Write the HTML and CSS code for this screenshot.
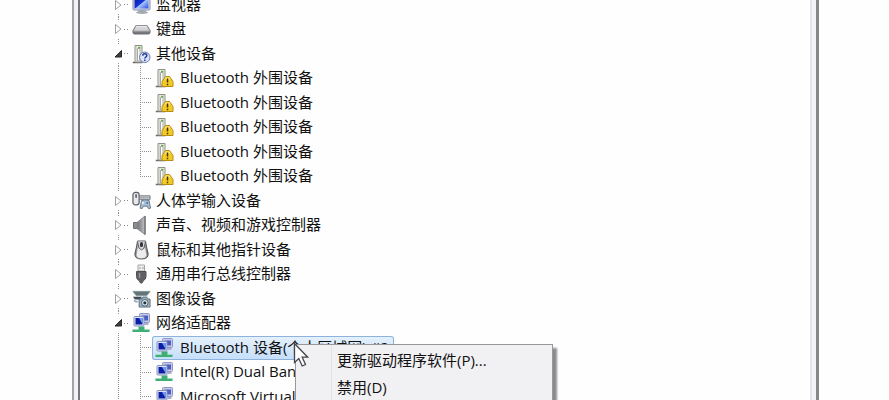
FILE: index.html
```html
<!DOCTYPE html>
<html lang="zh-CN">
<head>
  <meta charset="UTF-8" />
  <meta name="viewport" content="width=device-width, initial-scale=1.0" />
  <title>设备管理器</title>
  <link rel="stylesheet" href="styles.css">
</head>
<body>
  <svg class="sprites" aria-hidden="true">
    <defs>
      <linearGradient id="screen" x1="0" y1="0" x2="1" y2="1">
        <stop offset="0" stop-color="#0a16a8" />
        <stop offset=".5" stop-color="#1434d8" />
        <stop offset=".55" stop-color="#a9c4ff" />
        <stop offset="1" stop-color="#2a4fe0" />
      </linearGradient>
      <linearGradient id="metal" x1="0" y1="0" x2="1" y2="0">
        <stop offset="0" stop-color="#6c6c70" />
        <stop offset=".4" stop-color="#f4f4f4" />
        <stop offset="1" stop-color="#707074" />
      </linearGradient>
      <linearGradient id="cone" x1="0" y1="0" x2="1" y2="0">
        <stop offset="0" stop-color="#6e7074" />
        <stop offset="1" stop-color="#c2c4c8" />
      </linearGradient>
      <linearGradient id="keys" x1="0" y1="0" x2="0" y2="1">
        <stop offset="0" stop-color="#f2f2f4" />
        <stop offset="1" stop-color="#b4b4ba" />
      </linearGradient>
    </defs>

    <symbol id="closed" viewBox="0 0 10 18">
      <path d="M2.500 4.500v9L8 9z" fill="#fff" stroke="#a0a0a0" />
    </symbol>
    <symbol id="open" viewBox="0 0 10 18">
      <path d="M8.500 5.500v6.500H2z" fill="#404040" stroke="#262626" />
    </symbol>

    <symbol id="monitor" viewBox="0 0 18 20">
      <path d="M6 15h7l1 3H5z" fill="#b8bcc4" />
      <ellipse cx="9.500" cy="17.500" rx="6" ry="1.500" fill="#a4a8b0" />
      <rect x=".5" y="1" width="17" height="14" rx="1" fill="#d4dae8" stroke="#8890a8" />
      <rect x="2" y="2" width="14" height="11.500" fill="url(#screen)" />
    </symbol>

    <symbol id="keyboard" viewBox="0 0 18 20">
      <path d="M3.500 6.500h11l3 5v2q0 1.500-1.500 1.500H2Q.5 15 .5 13.500v-2z" fill="#77777d" stroke="#6c6c74" />
      <path d="M3.700 6.500h10.600l3 5q0 1-1 1H1.700q-1 0-1-1z" fill="url(#keys)" stroke="#929298" />
      <path d="M4 8.500h10M3 10.500h12" stroke="#d8d8dc" stroke-dasharray="1.500 .5" />
    </symbol>

    <symbol id="tower" viewBox="0 0 18 20">
      <path d="M0 18.500h10" stroke="#6c6c6c" stroke-width="1.500" />
      <path d="M2.500 1.500h7v16.500h-7z" fill="#eef0e6" stroke="#8c9088" />
      <path d="M3.500 2v15.500" stroke="#bcc0b8" />
      <path d="M5 4.500h2.500V17H5z" fill="#fff" stroke="#a6aaa2" />
      <path d="M5.500 3.500H8" stroke="#6bae51" stroke-width="1.500" />
    </symbol>

    <symbol id="unknown" viewBox="0 0 18 20">
      <use href="#tower" />
      <circle cx="12.300" cy="13.300" r="5.200" fill="#dde4fa" stroke="#6878b0" />
      <path d="M10.300 11.800q0-2 2-2t2 1.700q0 1-1 1.600t-1 1.400M12.300 15.500v1.500" fill="none" stroke="#28409c" stroke-width="1.500" />
    </symbol>

    <symbol id="warning" viewBox="0 0 18 20">
      <use href="#tower" />
      <path d="M10 8.500h4l3.500 5v5h-11v-5z" fill="#f3cb27" stroke="#b98c14" stroke-linejoin="round" />
      <path d="M10 9.500h4l1 2H9z" fill="#ffe978" />
      <path d="M12 10.500v4M12 15.700v1.600" stroke="#403000" stroke-width="1.500" />
    </symbol>

    <symbol id="hid" viewBox="0 0 20 20">
      <rect x="1" y="1" width="6.500" height="13" rx="2.500" fill="#e6e8ec" stroke="#5a5e66" stroke-width="1.300" />
      <path d="M4.300 3v3.500" stroke="#44484e" stroke-width="1.500" />
      <path d="M8 4.500h11v4H8z" fill="#a4a8ae" stroke="#7c8086" />
      <path d="M9 5.500h9M9 7.500h9" stroke="#dcdfe4" stroke-dasharray="1 1" />
      <path d="M10 9.500q4-1.500 8 0l1.500 8q-2.500 2-3.500-2h-4q-1 4-3.500 2z" fill="#a8bdcf" stroke="#62788c" />
      <circle cx="11.500" cy="12" r="1" fill="#fff" />
      <circle cx="16" cy="12" r="1" fill="#3b6a96" />
    </symbol>

    <symbol id="speaker" viewBox="0 0 18 20">
      <path d="M1 7.500h4v6H1z" fill="#8c8e92" stroke="#6c6e72" />
      <path d="M4.500 7.500L12.500 1v18.500L4.500 13.500z" fill="url(#cone)" stroke="#88898d" />
      <path d="M12.500 1v18.500" stroke="#77797d" stroke-width="1.500" />
    </symbol>

    <symbol id="mouse" viewBox="0 0 18 20">
      <path d="M5 1h8l1 6 1.500 6q1 6-6.500 6t-6.500-6L4 7z" fill="url(#metal)" stroke="#56565a" />
      <path d="M5.500 8Q9 12 12.500 8l1.500 7q0 3-5 3t-5-3z" fill="#ececee" />
      <path d="M5 1.500L6.500 8 9 10l2.500-2L13 1.500" fill="#d6d6d8" stroke="#66666a" />
      <rect x="7.500" y="2" width="3" height="5" rx="1.500" fill="#38383c" />
    </symbol>

    <symbol id="usb" viewBox="0 0 18 20">
      <path d="M5.500 1h6.500v6H5.500z" fill="#f0f0f0" stroke="#a4a4a4" />
      <path d="M7.500 3v2M10.500 3v2" stroke="#999" />
      <path d="M4 7.500h9.500v5q0 3-2.500 4L9.500 19H8l-1.500-2.500q-2.500-1-2.500-4z" fill="#606064" stroke="#505054" />
      <path d="M7 9v5" stroke="#95959a" stroke-width="1.500" />
    </symbol>

    <symbol id="imaging" viewBox="0 0 20 20">
      <path d="M1 2h18l-4 5H5z" fill="#62757a" stroke="#849298" />
      <path d="M5 6.500h11l2 2H3z" fill="#e2e8ec" />
      <path d="M1 7.500h9v3H3z" fill="#3c4d56" />
      <path d="M7.500 10h3l1-2h4l1 2h2.500v8.500H7.500z" fill="#9fb4c2" stroke="#587082" />
      <circle cx="13.500" cy="14" r="3.500" fill="#e4ecf0" stroke="#455a68" />
      <circle cx="13.500" cy="14" r="1.700" fill="#25343e" />
      <path d="M2 12l4 1" stroke="#9cacb4" stroke-width="2" />
    </symbol>

    <symbol id="network" viewBox="0 0 18 20">
      <rect x="7" y=".5" width="10" height="9" rx="1" fill="#c6cce8" stroke="#8f96c4" />
      <rect x="9" y="2.500" width="6.500" height="5" fill="#4c5cc0" />
      <path d="M12 10h4v2h-4z" fill="#a8aed0" />
      <rect x="1.500" y="3.500" width="10" height="9.500" rx="1" fill="#dde2f4" stroke="#8690bc" />
      <rect x="3" y="5" width="7" height="6.500" fill="#0c1fa4" />
      <path d="M6.500 5H10v6z" fill="#6c9cf8" />
      <path d="M6 13.500h6v3h5V19H0v-2.500h6z" fill="#3fae74" />
      <path d="M0 16.500h6M12 16.500h5" stroke="#a0dcbc" />
    </symbol>
  </svg>

  <main class="window">
    <ul class="tree">
      <li class="row">
        <button class="toggle" aria-label="展开"><svg><use href="#closed" /></svg></button>
        <span class="link"></span>
        <span class="item"><svg class="icon"><use href="#monitor" /></svg>监视器</span>
      </li>
      <li class="row">
        <button class="toggle" aria-label="展开"><svg><use href="#closed" /></svg></button>
        <span class="link"></span>
        <span class="item"><svg class="icon"><use href="#keyboard" /></svg>键盘</span>
      </li>
      <li class="row">
        <button class="toggle" aria-label="折叠"><svg><use href="#open" /></svg></button>
        <span class="link"></span>
        <span class="item"><svg class="icon"><use href="#unknown" /></svg>其他设备</span>
      </li>
      <li class="row child">
        <span class="trunk"></span><span class="branch"></span>
        <span class="item"><svg class="icon"><use href="#warning" /></svg>Bluetooth 外围设备</span>
      </li>
      <li class="row child">
        <span class="trunk"></span><span class="branch"></span>
        <span class="item"><svg class="icon"><use href="#warning" /></svg>Bluetooth 外围设备</span>
      </li>
      <li class="row child">
        <span class="trunk"></span><span class="branch"></span>
        <span class="item"><svg class="icon"><use href="#warning" /></svg>Bluetooth 外围设备</span>
      </li>
      <li class="row child">
        <span class="trunk"></span><span class="branch"></span>
        <span class="item"><svg class="icon"><use href="#warning" /></svg>Bluetooth 外围设备</span>
      </li>
      <li class="row child">
        <span class="trunk"></span><span class="branch last"></span>
        <span class="item"><svg class="icon"><use href="#warning" /></svg>Bluetooth 外围设备</span>
      </li>
      <li class="row">
        <button class="toggle" aria-label="展开"><svg><use href="#closed" /></svg></button>
        <span class="link"></span>
        <span class="item"><svg class="icon"><use href="#hid" /></svg>人体学输入设备</span>
      </li>
      <li class="row">
        <button class="toggle" aria-label="展开"><svg><use href="#closed" /></svg></button>
        <span class="link"></span>
        <span class="item"><svg class="icon"><use href="#speaker" /></svg>声音、视频和游戏控制器</span>
      </li>
      <li class="row">
        <button class="toggle" aria-label="展开"><svg><use href="#closed" /></svg></button>
        <span class="link"></span>
        <span class="item"><svg class="icon"><use href="#mouse" /></svg>鼠标和其他指针设备</span>
      </li>
      <li class="row">
        <button class="toggle" aria-label="展开"><svg><use href="#closed" /></svg></button>
        <span class="link"></span>
        <span class="item"><svg class="icon"><use href="#usb" /></svg>通用串行总线控制器</span>
      </li>
      <li class="row">
        <button class="toggle" aria-label="展开"><svg><use href="#closed" /></svg></button>
        <span class="link"></span>
        <span class="item"><svg class="icon"><use href="#imaging" /></svg>图像设备</span>
      </li>
      <li class="row">
        <button class="toggle" aria-label="折叠"><svg><use href="#open" /></svg></button>
        <span class="link"></span>
        <span class="item"><svg class="icon"><use href="#network" /></svg>网络适配器</span>
      </li>
      <li class="row child">
        <span class="trunk"></span><span class="branch"></span>
        <span class="item selected"><svg class="icon"><use href="#network" /></svg>Bluetooth 设备(个人区域网) #2</span>
      </li>
      <li class="row child">
        <span class="trunk"></span><span class="branch"></span>
        <span class="item"><svg class="icon"><use href="#network" /></svg>Intel(R) Dual Band</span>
      </li>
      <li class="row child">
        <span class="trunk"></span><span class="branch"></span>
        <span class="item"><svg class="icon"><use href="#network" /></svg>Microsoft Virtual</span>
      </li>
    </ul>
  </main>

  <div class="menu">
    <button>更新驱动程序软件(P)...</button>
    <button>禁用(D)</button>
  </div>

  <svg class="cursor" viewBox="0 0 16 26" aria-hidden="true">
    <path d="M1.500 1.500v19l4.300-4 3.400 7.500 3.300-1.500-3.300-7.300h5.500z" fill="#fff" stroke="#44464e" stroke-width="1.300" />
  </svg>
</body>
</html>
```

FILE: styles.css
```css
* {
  box-sizing: border-box;
}
html, body {
  margin: 0;
  height: 100%;
  overflow: hidden;
}
body {
  position: relative;
  background: #fefefe;
  color: #111;
  font-family: "Open Sans", "Noto Sans CJK SC", sans-serif;
  font-size: 15px;
  line-height: 22px;
}
button {
  border: none;
  padding: 0;
  background: none;
  color: inherit;
  font: inherit;
}
.sprites {
  position: absolute;
  width: 0;
  height: 0;
}

/* window frame */
.window {
  height: 100%;
  margin: 0 70px 0 72px;
  padding: 0 4px;
  border-left: 2px solid #a2a2a8;
  border-right: 3px solid #868686;
  background: #f1f1f6;
}
.tree {
  height: 100%;
  margin: 0;
  padding: 0 0 0 33px;
  overflow: hidden;
  border-left: 2px solid #77777d;
  border-right: 2px solid #e4e4e4;
  background: #fefefe;
  list-style: none;
}

/* tree rows */
.row {
  display: flex;
  align-items: center;
  height: 24px;
  white-space: nowrap;
}
.row:nth-child(odd) {
  height: 25px;
}
.row:first-child {
  margin-top: -8px;
}
.toggle, .trunk {
  display: flex;
  align-items: center;
  width: 10px;
  height: 100%;
  background: repeating-linear-gradient(#909090 0 1px, transparent 1px 2px) 5px 0 / 1px 100% no-repeat;
}
.toggle svg {
  width: 10px;
  height: 18px;
  background: #fefefe;
}
.link {
  width: 6px;
  height: 1px;
  background: repeating-linear-gradient(to left, transparent 0 1px, #888 1px 2px, transparent 2px 3px);
}
.branch {
  width: 12px;
  height: 100%;
  margin-left: 17px;
  background:
    repeating-linear-gradient(#909090 0 1px, transparent 1px 2px) 0 0 / 1px 100% no-repeat,
    repeating-linear-gradient(to right, #909090 0 1px, transparent 1px 2px) 0 12px / 100% 1px no-repeat;
}
.branch.last {
  background-size: 1px 50%, 100% 1px;
}
.item {
  display: flex;
  gap: 5px;
  height: 24px;
  padding: 0 5px 0 3px;
  border-radius: 3px;
}
.child .item {
  gap: 6px;
}
.icon {
  flex: none;
  align-self: center;
  width: 19px;
  height: 20px;
}
.selected {
  background: linear-gradient(#e6f1fc, #c4defa);
  box-shadow: inset 0 0 0 1px #8db3dc;
}

/* context menu */
.menu {
  position: absolute;
  top: 344px;
  bottom: -8px;
  left: 295px;
  display: flex;
  flex-direction: column;
  width: 258px;
  padding: 3px 2px;
  border: 1px solid #979797;
  background: linear-gradient(#e2e2e6, #e2e2e6) 35px 0 / 1px 100% no-repeat #f1f0f3;
  box-shadow: 4px 4px 2px rgba(0, 0, 0, 0.45);
}
.menu button {
  height: 27px;
  padding: 0 0 4px 39px;
  text-align: left;
}
.cursor {
  position: absolute;
  top: 342px;
  left: 293px;
  width: 16px;
  height: 26px;
}
```
